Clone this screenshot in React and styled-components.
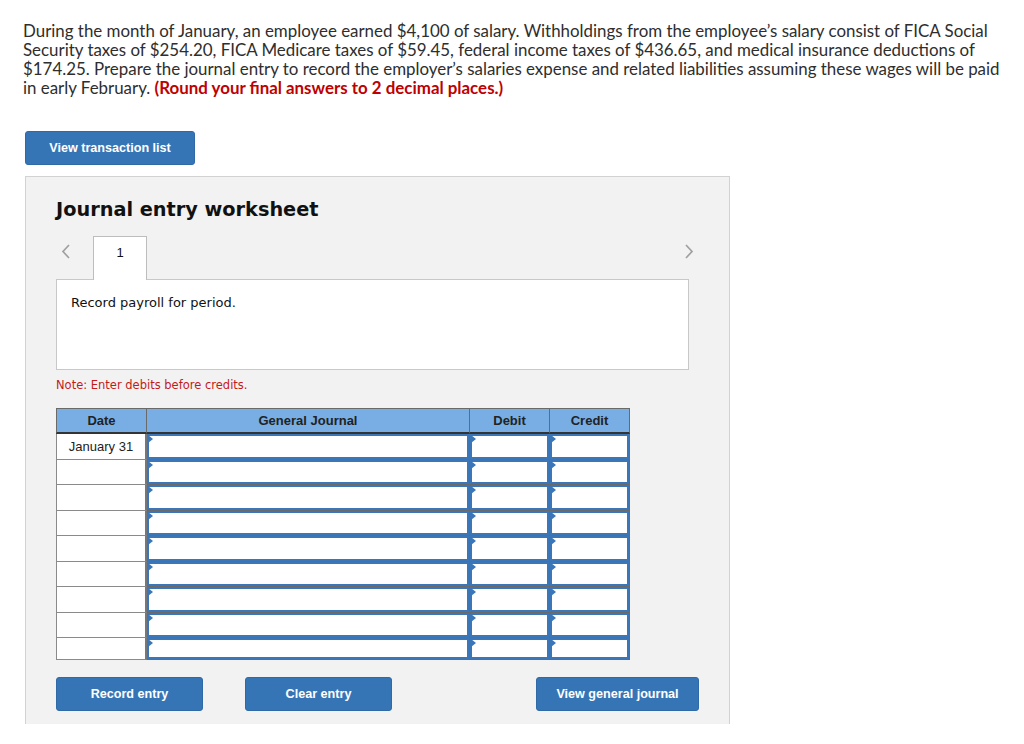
import React from "react";
import styled, { createGlobalStyle } from "styled-components";

const GlobalStyle = createGlobalStyle`
  html, body {
    margin: 0;
    padding: 0;
    background: #fff;
  }
`;

const Page = styled.div`
  padding: 21px 12px 0 23px;
  width: 1024px;
  box-sizing: border-box;
`;

const Question = styled.p`
  margin: 0;
  font-family: Lato, "Liberation Sans", sans-serif;
  font-size: 16.9px;
  line-height: 19px;
  color: #2e2e2e;
`;

const Hint = styled.strong`
  color: #c00000;
  font-weight: 700;
`;

const BlueButton = styled.button`
  width: ${(p) => p.$w}px;
  height: 34px;
  margin-left: ${(p) => p.$gap || 0}px;
  background: #3575b6;
  border: 1px solid #2f6aa6;
  border-radius: 3px;
  color: #fff;
  font-family: "Liberation Sans", Arial, sans-serif;
  font-weight: 700;
  font-size: 12.6px;
  padding: 0;
  cursor: pointer;
`;

const TopButtonRow = styled.div`
  margin-top: 34px;
  padding-left: 2px;
`;

const Worksheet = styled.section`
  margin: 11px 0 0 2px;
  width: 705px;
  box-sizing: border-box;
  background: #f2f2f2;
  border: 1px solid #d2d2d2;
  border-bottom: none;
  padding: 21px 40px 13px 30px;
`;

const Title = styled.h2`
  margin: 0;
  font-family: "DejaVu Sans", Verdana, sans-serif;
  font-weight: 700;
  font-size: 19.3px;
  line-height: 24px;
  color: #111;
`;

const TabStrip = styled.div`
  display: flex;
  align-items: flex-end;
  margin-top: 13px;
  height: 44px;
`;

const Chevron = styled.span`
  display: flex;
  align-items: center;
  justify-content: center;
  align-self: flex-start;
  width: 20px;
  height: 33px;
  margin-right: ${(p) => p.$pull || 0}px;
`;

const Tab = styled.div`
  width: 54px;
  height: 44px;
  box-sizing: border-box;
  background: #fff;
  border: 1px solid #bdbdbd;
  border-bottom: none;
  margin-left: 17px;
  margin-bottom: -1px;
  position: relative;
  z-index: 1;
  display: flex;
  justify-content: center;
  padding-top: 8px;
  font-family: "Liberation Sans", Arial, sans-serif;
  font-size: 13px;
  color: #111;
`;

const Spacer = styled.div`
  flex: 1;
`;

const Description = styled.div`
  height: 91px;
  box-sizing: border-box;
  background: #fff;
  border: 1px solid #c8c8c8;
  padding: 15px 14px;
  font-family: "DejaVu Sans", Verdana, sans-serif;
  font-size: 13px;
  color: #111;
`;

const Note = styled.div`
  margin-top: 8px;
  font-family: "DejaVu Sans", Verdana, sans-serif;
  font-size: 11.5px;
  color: #c41a1a;
`;

const Journal = styled.div`
  margin-top: 16px;
  display: grid;
  grid-template-columns: 91px 323px 80px 80px;
  width: 574px;
  font-family: "Liberation Sans", Arial, sans-serif;
  font-size: 13px;
  color: #222;
`;

const HeadCell = styled.div`
  height: 26px;
  box-sizing: border-box;
  background: #78aee3;
  border-top: 1px solid #6a6a6a;
  border-right: 1px solid #6a6a6a;
  border-left: ${(p) => (p.$first ? "1px solid #6a6a6a" : "none")};
  border-bottom: 2px solid #333;
  display: flex;
  align-items: center;
  justify-content: center;
  font-weight: 700;
`;

const DateCell = styled.div`
  height: ${(p) => p.$h}px;
  box-sizing: border-box;
  background: #fff;
  border-left: 1px solid #8a8a8a;
  border-bottom: 1px solid #8a8a8a;
  border-right: 2px solid #777;
  display: flex;
  align-items: center;
  justify-content: center;
  padding-bottom: 1px;
`;

const InputCell = styled.div`
  height: ${(p) => p.$h}px;
  box-sizing: border-box;
  border-right: 1px solid #6a6a6a;
  border-bottom: 1px solid #6a6a6a;
  background: #6a6a6a;
`;

const Field = styled.div`
  position: relative;
  height: 100%;
  box-sizing: border-box;
  border: 2px solid #3b76b8;
  background: #fff;

  &::before {
    content: "";
    position: absolute;
    left: -1px;
    top: -1px;
    border-left: 5px solid #3b76b8;
    border-top: 4px solid transparent;
    border-bottom: 4px solid transparent;
  }
`;

const ActionRow = styled.div`
  display: flex;
  margin-top: 17px;
  width: 643px;
`;

const ChevronIcon = ({ dir }) => (
  <svg width="10" height="15" viewBox="0 0 10 15">
    <path
      d={dir === "left" ? "M8 1 L2 7.5 L8 14" : "M2 1 L8 7.5 L2 14"}
      fill="none"
      stroke="#a0a0a0"
      strokeWidth="1.7"
    />
  </svg>
);

const rows = ["January 31", "", "", "", "", "", "", "", ""];

export default function App() {
  return (
    <Page>
      <GlobalStyle />
      <Question>
        During the month of January, an employee earned $4,100 of salary. Withholdings from the
        employee’s salary consist of FICA Social Security taxes of $254.20, FICA Medicare taxes of
        $59.45, federal income taxes of $436.65, and medical insurance deductions of $174.25.
        Prepare the journal entry to record the employer’s salaries expense and related
        liabilities assuming these wages will be paid in early February.{" "}
        <Hint>(Round your final answers to 2 decimal places.)</Hint>
      </Question>

      <TopButtonRow>
        <BlueButton $w={170}>View transaction list</BlueButton>
      </TopButtonRow>

      <Worksheet>
        <Title>Journal entry worksheet</Title>

        <TabStrip>
          <Chevron>
            <ChevronIcon dir="left" />
          </Chevron>
          <Tab>1</Tab>
          <Spacer />
          <Chevron $pull={-10}>
            <ChevronIcon dir="right" />
          </Chevron>
        </TabStrip>

        <Description>Record payroll for period.</Description>

        <Note>Note: Enter debits before credits.</Note>

        <Journal>
          <HeadCell $first>Date</HeadCell>
          <HeadCell>General Journal</HeadCell>
          <HeadCell>Debit</HeadCell>
          <HeadCell>Credit</HeadCell>
          {rows.map((d, i) => {
            const h = i === rows.length - 1 ? 22 : i % 2 === 0 ? 26 : 25;
            return (
              <React.Fragment key={i}>
                <DateCell $h={h}>{d}</DateCell>
                <InputCell $h={h}>
                  <Field />
                </InputCell>
                <InputCell $h={h}>
                  <Field />
                </InputCell>
                <InputCell $h={h}>
                  <Field />
                </InputCell>
              </React.Fragment>
            );
          })}
        </Journal>

        <ActionRow>
          <BlueButton $w={147}>Record entry</BlueButton>
          <BlueButton $w={147} $gap={42}>Clear entry</BlueButton>
          <Spacer />
          <BlueButton $w={163}>View general journal</BlueButton>
        </ActionRow>
      </Worksheet>
    </Page>
  );
}
